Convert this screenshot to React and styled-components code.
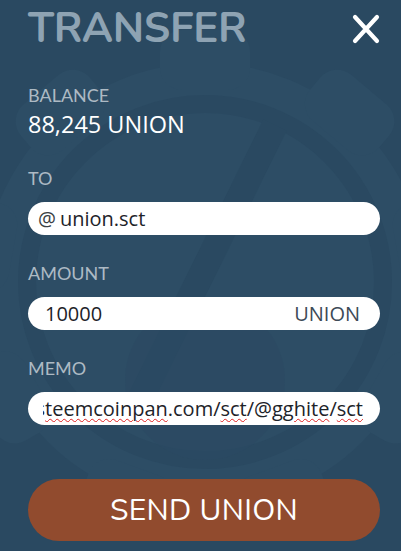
import React from 'react';
import styled, { createGlobalStyle } from 'styled-components';

const GlobalStyle = createGlobalStyle`
  html, body {
    margin: 0;
    padding: 0;
    background: #2a4961;
  }
  * { box-sizing: border-box; }
`;

const Panel = styled.div`
  position: relative;
  width: 401px;
  height: 551px;
  overflow: hidden;
  background: #2a4961;
  font-family: Lato, "Open Sans", sans-serif;
`;

const Watermark = styled.svg`
  position: absolute;
  left: 0;
  top: 0;
  width: 401px;
  height: 551px;
  pointer-events: none;
`;

const Content = styled.div`
  position: relative;
  display: flex;
  flex-direction: column;
  padding: 7px 21px 0 28px;
`;

const Header = styled.div`
  display: flex;
  align-items: center;
  justify-content: space-between;
  height: 44px;
`;

const Title = styled.h1`
  margin: 0;
  font-family: Nunito, Lato, sans-serif;
  font-weight: 700;
  font-size: 42px;
  letter-spacing: -0.3px;
  color: #8ea3b3;
  line-height: 1;
`;

const Close = styled.svg`
  width: 28px;
  height: 30px;
`;

const Label = styled.div`
  font-size: 18px;
  color: #adbac4;
  line-height: 1;
  margin-top: ${p => p.$top}px;
`;

const Balance = styled.div`
  font-family: "Open Sans", sans-serif;
  font-size: 23.5px;
  color: #ffffff;
  margin-top: 6px;
  line-height: 1.2;
`;

const Field = styled.div`
  display: flex;
  align-items: center;
  height: 33px;
  margin-top: 15px;
  background: #ffffff;
  border-radius: 17px;
  padding: 0 ${p => p.$right || 12}px 0 ${p => p.$left || 10}px;
  font-family: "Open Sans", sans-serif;
  font-size: 20px;
  color: #1d2329;
  overflow: hidden;
  white-space: nowrap;
`;

const At = styled.span`
  margin-right: 4px;
  color: #3a3f44;
`;

const Unit = styled.span`
  margin-left: auto;
  color: #3d4a57;
`;

const MemoClip = styled.div`
  flex: 1;
  display: flex;
  justify-content: flex-end;
  overflow: hidden;
`;

const MemoText = styled.span`
  flex-shrink: 0;
`;

const Typo = styled.span`
  text-decoration: underline wavy #e02020;
  text-decoration-thickness: 1px;
  text-underline-offset: 2px;
`;

const SendButton = styled.button`
  margin-top: 54px;
  height: 62px;
  border: none;
  border-radius: 31px;
  background: #914b2e;
  color: #ffffff;
  font-family: Nunito, Lato, sans-serif;
  font-size: 30px;
  letter-spacing: 0.3px;
  cursor: pointer;
`;

const teeth = [-80, -40, 0, 40, 80, 120, 160, 200, 240];

export default function App() {
  return (
    <>
      <GlobalStyle />
      <Panel>
        <Watermark viewBox="0 0 401 551">
          <g fill="#2d4d65">
            <circle cx="205" cy="285" r="222" />
            {teeth.map(a => (
              <rect
                key={a}
                x="160"
                y="30"
                width="90"
                height="60"
                rx="22"
                transform={`rotate(${a} 205 285)`}
              />
            ))}
          </g>
          <circle cx="205" cy="282" r="178" fill="none" stroke="#2a4961" strokeWidth="18" />
          <path d="M 275 125 L 130 420" stroke="#2a4961" strokeWidth="26" fill="none" />
          <circle cx="205" cy="380" r="80" fill="#2b4a62" opacity="0.6" />
        </Watermark>
        <Content>
          <Header>
            <Title>TRANSFER</Title>
            <Close viewBox="0 0 28 30">
              <path d="M3 3 L25 27 M25 3 L3 27" stroke="#ffffff" strokeWidth="4.2" strokeLinecap="round" />
            </Close>
          </Header>
          <Label $top={35}>BALANCE</Label>
          <Balance>88,245 UNION</Balance>
          <Label $top={31}>TO</Label>
          <Field>
            <At>@</At>
            union.sct
          </Field>
          <Label $top={29}>AMOUNT</Label>
          <Field $left={17} $right={20}>
            10000
            <Unit>UNION</Unit>
          </Field>
          <Label $top={29}>MEMO</Label>
          <Field $left={15} $right={17}>
            <MemoClip>
              <MemoText>
                https://s<Typo>teemcoinpan</Typo>.com/<Typo>sct</Typo>/@<Typo>gghite</Typo>/<Typo>sct</Typo>
              </MemoText>
            </MemoClip>
          </Field>
          <SendButton>SEND UNION</SendButton>
        </Content>
      </Panel>
    </>
  );
}
